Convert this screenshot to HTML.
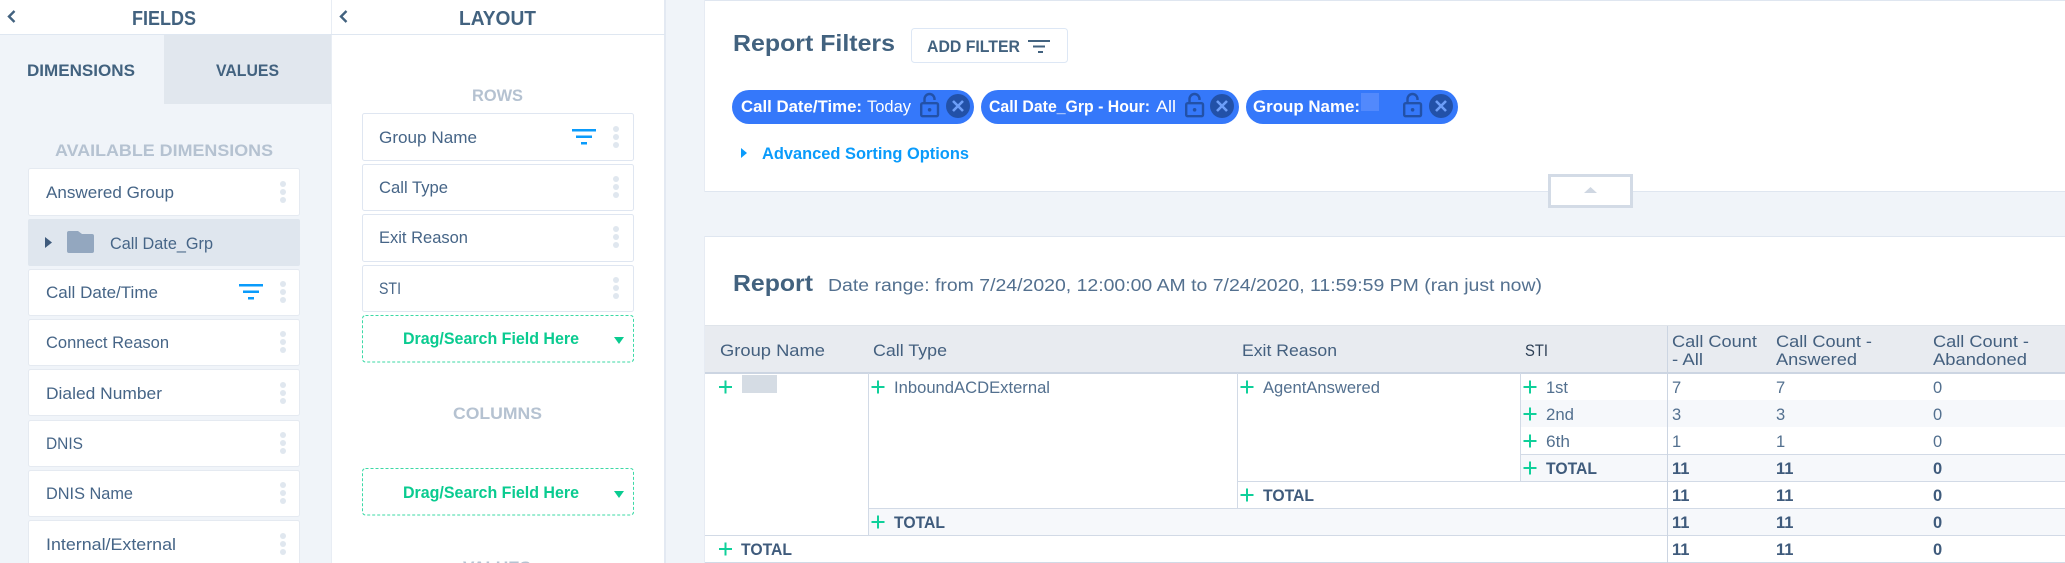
<!DOCTYPE html>
<html lang="en">
<head>
<meta charset="utf-8">
<title>Report</title>
<style>
html,body{margin:0;padding:0;width:2065px;height:563px;overflow:hidden;background:#f0f4f9}
svg{display:block}
text{font-family:"Liberation Sans",Arial,sans-serif;white-space:pre}
.c{font-size:17px;fill:#466587}
.h{font-size:20px;font-weight:700;fill:#42627f}
.t{font-size:17px;font-weight:700;fill:#42627f}
.l{font-size:17px;font-weight:700;fill:#b5c2d1}
.g{font-size:16.5px;font-weight:700;fill:#0acb90}
.w{font-size:16.5px;fill:#fff}
.wb{font-size:16.5px;font-weight:700;fill:#fff}
.th{font-size:16.5px;fill:#44607f}
.td{font-size:16.5px;fill:#53708f}
.b{font-size:16.5px;font-weight:700;fill:#3f5b7c}
.d{fill:#e0e7ef}
.f{fill:#0a9bfb}
.p{stroke:#0fd09a;stroke-width:2;fill:none}
</style>
</head>
<body>
<svg width="2065" height="563" viewBox="0 0 2065 563" xmlns="http://www.w3.org/2000/svg">
<defs>
<g id="dots"><circle cx="0" cy="0" r="3" class="d"/><circle cx="0" cy="8" r="3" class="d"/><circle cx="0" cy="16" r="3" class="d"/></g>
<g id="fil"><rect x="0" y="0" width="24" height="2.500" class="f"/><rect x="4" y="6.500" width="16" height="2.500" class="f"/><rect x="9" y="13" width="6" height="2.500" class="f"/></g>
<path id="plus" d="M-6.500 0H6.500M0 -6.500V6.500" class="p"/>
<g id="lock" fill="none" stroke="#2251a8" stroke-width="2.400"><rect x="1.200" y="10.200" width="16.800" height="13" rx="1.500"/><path d="M4.500 10V6a5 5 0 0 1 10 0v1"/><circle cx="9.600" cy="16.800" r="1.800" fill="#2251a8" stroke="none"/></g>
<g id="xb"><circle cx="0" cy="0" r="12" fill="#2251a8"/><path d="M-5 -5L5 5M5 -5L-5 5" stroke="#6d9ef8" stroke-width="2.600" fill="none"/></g>
</defs>

<rect x="0" y="0" width="2065" height="563" fill="#f0f4f9"/>

<!-- FIELDS panel -->
<rect x="0" y="0" width="331" height="34" fill="#fff"/>
<rect x="0" y="34" width="331" height="1" fill="#dfe7f1"/>
<path d="M14.500 11L9 16.500L14.500 22" fill="none" stroke="#42627f" stroke-width="2.400"/>
<text x="132" y="25" class="h" textLength="64" lengthAdjust="spacingAndGlyphs">FIELDS</text>
<rect x="164" y="35" width="167" height="69" fill="#e1e7ee"/>
<text x="27" y="76" class="t" textLength="108" lengthAdjust="spacingAndGlyphs">DIMENSIONS</text>
<text x="216" y="76" class="t" textLength="63" lengthAdjust="spacingAndGlyphs">VALUES</text>
<text x="55" y="156" class="l" textLength="218" lengthAdjust="spacingAndGlyphs">AVAILABLE DIMENSIONS</text>

<g fill="#fff" stroke="#e5eaf1" stroke-width="1">
<rect x="28.500" y="168.500" width="271" height="47" rx="2"/>
<rect x="28.500" y="269.500" width="271" height="46" rx="2"/>
<rect x="28.500" y="319.500" width="271" height="46" rx="2"/>
<rect x="28.500" y="369.500" width="271" height="46" rx="2"/>
<rect x="28.500" y="420.500" width="271" height="46" rx="2"/>
<rect x="28.500" y="470.500" width="271" height="46" rx="2"/>
<rect x="28.500" y="520.500" width="271" height="60" rx="2"/>
</g>
<rect x="28" y="219" width="272" height="47" rx="2" fill="#dfe6ee"/>
<path d="M45 237L52 242.500L45 248Z" fill="#3f5b7c"/>
<path d="M67 233a2 2 0 0 1 2-2h9l4 3h10a2 2 0 0 1 2 2v15a2 2 0 0 1-2 2H69a2 2 0 0 1-2-2Z" fill="#93a7bf"/>

<text x="46" y="198" class="c" textLength="128" lengthAdjust="spacingAndGlyphs">Answered Group</text>
<text x="110" y="249" class="c" textLength="103" lengthAdjust="spacingAndGlyphs">Call Date_Grp</text>
<text x="46" y="298" class="c" textLength="112" lengthAdjust="spacingAndGlyphs">Call Date/Time</text>
<text x="46" y="348" class="c" textLength="123" lengthAdjust="spacingAndGlyphs">Connect Reason</text>
<text x="46" y="399" class="c" textLength="116" lengthAdjust="spacingAndGlyphs">Dialed Number</text>
<text x="46" y="449" class="c" textLength="37" lengthAdjust="spacingAndGlyphs">DNIS</text>
<text x="46" y="499" class="c" textLength="87" lengthAdjust="spacingAndGlyphs">DNIS Name</text>
<text x="46" y="550" class="c" textLength="130" lengthAdjust="spacingAndGlyphs">Internal/External</text>

<use href="#dots" x="283" y="184"/>
<use href="#dots" x="283" y="284"/>
<use href="#dots" x="283" y="334"/>
<use href="#dots" x="283" y="385"/>
<use href="#dots" x="283" y="435"/>
<use href="#dots" x="283" y="485"/>
<use href="#dots" x="283" y="536"/>
<use href="#fil" x="239" y="284"/>

<!-- LAYOUT panel -->
<rect x="331" y="0" width="334" height="563" fill="#fff"/>
<rect x="331" y="0" width="1" height="563" fill="#e8edf4"/>
<rect x="664" y="0" width="2" height="563" fill="#e3e9f2"/>
<rect x="331" y="34" width="334" height="1" fill="#dfe7f1"/>
<path d="M346.500 11L341 16.500L346.500 22" fill="none" stroke="#42627f" stroke-width="2.400"/>
<text x="459" y="25" class="h" textLength="77" lengthAdjust="spacingAndGlyphs">LAYOUT</text>
<text x="472" y="101" class="l" textLength="51" lengthAdjust="spacingAndGlyphs">ROWS</text>

<g fill="#fff" stroke="#dfe6f1" stroke-width="1">
<rect x="362.500" y="113.500" width="271" height="47" rx="2"/>
<rect x="362.500" y="164.500" width="271" height="46" rx="2"/>
<rect x="362.500" y="214.500" width="271" height="47" rx="2"/>
<rect x="362.500" y="265.500" width="271" height="46" rx="2"/>
</g>
<text x="379" y="143" class="c" textLength="98" lengthAdjust="spacingAndGlyphs">Group Name</text>
<text x="379" y="193" class="c" textLength="69" lengthAdjust="spacingAndGlyphs">Call Type</text>
<text x="379" y="243" class="c" textLength="89" lengthAdjust="spacingAndGlyphs">Exit Reason</text>
<text x="379" y="294" class="c" textLength="22" lengthAdjust="spacingAndGlyphs">STI</text>
<use href="#dots" x="616" y="129"/>
<use href="#dots" x="616" y="179"/>
<use href="#dots" x="616" y="229"/>
<use href="#dots" x="616" y="280"/>
<use href="#fil" x="572" y="129"/>

<g fill="#fff" stroke="#3dd9a6" stroke-width="1" stroke-dasharray="3 2">
<rect x="362.500" y="315.500" width="271" height="46.500" rx="3"/>
<rect x="362.500" y="468.500" width="271" height="46.500" rx="3"/>
</g>
<text x="403" y="344" class="g" textLength="176" lengthAdjust="spacingAndGlyphs">Drag/Search Field Here</text>
<text x="403" y="498" class="g" textLength="176" lengthAdjust="spacingAndGlyphs">Drag/Search Field Here</text>
<path d="M614 337H624L619 344Z" fill="#0acb90"/>
<path d="M614 491H624L619 498Z" fill="#0acb90"/>
<text x="453" y="419" class="l" textLength="89" lengthAdjust="spacingAndGlyphs">COLUMNS</text>
<text x="463" y="573" class="l" textLength="68" lengthAdjust="spacingAndGlyphs">VALUES</text>

<!-- Report Filters card -->
<rect x="705" y="0" width="1360" height="192" fill="#fff"/>
<rect x="705" y="0" width="1360" height="1" fill="#dfe6f0"/>
<rect x="704" y="0" width="1" height="192" fill="#e6ebf3"/>
<rect x="705" y="191" width="1360" height="1" fill="#dfe6f0"/>
<text x="733" y="51" font-size="23" font-weight="700" fill="#42627f" textLength="162" lengthAdjust="spacingAndGlyphs">Report Filters</text>
<rect x="911.500" y="28.500" width="156" height="34" rx="3" fill="#fff" stroke="#dde7f5"/>
<text x="927" y="52" font-size="16.500" font-weight="700" fill="#42627f" textLength="93" lengthAdjust="spacingAndGlyphs">ADD FILTER</text>
<rect x="1028" y="40" width="22" height="2" fill="#42627f"/>
<rect x="1033" y="45.500" width="12" height="2" fill="#42627f"/>
<rect x="1038" y="51" width="5" height="2" fill="#42627f"/>

<rect x="732" y="90" width="242" height="34" rx="17" fill="#3578fa"/>
<text x="741" y="112" class="wb" textLength="121" lengthAdjust="spacingAndGlyphs">Call Date/Time:</text>
<text x="867" y="112" class="w" textLength="44" lengthAdjust="spacingAndGlyphs">Today</text>
<use href="#lock" x="920" y="93"/>
<use href="#xb" x="958" y="106"/>

<rect x="981" y="90" width="258" height="34" rx="17" fill="#3578fa"/>
<text x="989" y="112" class="wb" textLength="161" lengthAdjust="spacingAndGlyphs">Call Date_Grp - Hour:</text>
<text x="1156" y="112" class="w" textLength="20" lengthAdjust="spacingAndGlyphs">All</text>
<use href="#lock" x="1185" y="93"/>
<use href="#xb" x="1222" y="106"/>

<rect x="1246" y="90" width="212" height="34" rx="17" fill="#3578fa"/>
<text x="1253" y="112" class="wb" textLength="107" lengthAdjust="spacingAndGlyphs">Group Name:</text>
<rect x="1361" y="93" width="18" height="18" fill="#5289fc"/>
<use href="#lock" x="1403" y="93"/>
<use href="#xb" x="1441" y="106"/>

<path d="M741 148L747 153L741 158Z" class="f"/>
<text x="762" y="159" font-size="16.500" font-weight="700" fill="#0a9bfb" textLength="207" lengthAdjust="spacingAndGlyphs">Advanced Sorting Options</text>

<!-- collapse tab -->
<rect x="1549.500" y="175.500" width="82" height="31" fill="#fff" stroke="#d3dbe6" stroke-width="3"/>
<path d="M1584 193L1590.500 187L1597 193Z" fill="#cfd7e2"/>

<!-- Report card -->
<rect x="705" y="236" width="1360" height="327" fill="#fff"/>
<rect x="705" y="236" width="1360" height="1" fill="#dfe6f0"/>
<rect x="704" y="236" width="1" height="327" fill="#e6ebf3"/>
<text x="733" y="291" font-size="23" font-weight="700" fill="#42627f" textLength="80" lengthAdjust="spacingAndGlyphs">Report</text>
<text x="828" y="291" font-size="17.500" fill="#53708f" textLength="714" lengthAdjust="spacingAndGlyphs">Date range: from 7/24/2020, 12:00:00 AM to 7/24/2020, 11:59:59 PM (ran just now)</text>

<!-- table backgrounds -->
<rect x="705" y="326" width="1360" height="47" fill="#e8ebf0"/>
<rect x="1521" y="400" width="544" height="27" fill="#f6f8fb"/>
<rect x="1521" y="454" width="544" height="27" fill="#f6f8fb"/>
<rect x="869" y="508" width="1196" height="27" fill="#f6f8fb"/>

<!-- table lines -->
<rect x="705" y="325" width="1360" height="1" fill="#dfe4ea"/>
<rect x="705" y="372" width="1360" height="2" fill="#ccd5e2"/>
<rect x="1521" y="454" width="544" height="1" fill="#d2dae6"/>
<rect x="1238" y="481" width="827" height="1" fill="#d2dae6"/>
<rect x="869" y="508" width="1196" height="1" fill="#d2dae6"/>
<rect x="705" y="535" width="1360" height="1" fill="#d2dae6"/>
<rect x="705" y="562" width="1360" height="1" fill="#d2dae6"/>
<rect x="868" y="373" width="1" height="163" fill="#d2dae6"/>
<rect x="1237" y="373" width="1" height="136" fill="#d2dae6"/>
<rect x="1520" y="373" width="1" height="109" fill="#d2dae6"/>
<rect x="1667" y="326" width="1" height="237" fill="#ccd5e2"/>

<!-- header text -->
<text x="720" y="356" class="th" textLength="105" lengthAdjust="spacingAndGlyphs">Group Name</text>
<text x="873" y="356" class="th" textLength="74" lengthAdjust="spacingAndGlyphs">Call Type</text>
<text x="1242" y="356" class="th" textLength="95" lengthAdjust="spacingAndGlyphs">Exit Reason</text>
<text x="1525" y="356" class="th" style="fill:#2d3f55" textLength="23" lengthAdjust="spacingAndGlyphs">STI</text>
<text x="1672" y="347" class="th" textLength="85" lengthAdjust="spacingAndGlyphs">Call Count</text>
<text x="1672" y="365" class="th" textLength="31" lengthAdjust="spacingAndGlyphs">- All</text>
<text x="1776" y="347" class="th" textLength="96" lengthAdjust="spacingAndGlyphs">Call Count -</text>
<text x="1776" y="365" class="th" textLength="81" lengthAdjust="spacingAndGlyphs">Answered</text>
<text x="1933" y="347" class="th" textLength="96" lengthAdjust="spacingAndGlyphs">Call Count -</text>
<text x="1933" y="365" class="th" textLength="94" lengthAdjust="spacingAndGlyphs">Abandoned</text>

<!-- body -->
<use href="#plus" x="725.500" y="387"/>
<rect x="742" y="375" width="35" height="18" fill="#d5dce4"/>
<use href="#plus" x="878" y="387"/>
<text x="894" y="393" class="td" textLength="156" lengthAdjust="spacingAndGlyphs">InboundACDExternal</text>
<use href="#plus" x="1247" y="387"/>
<text x="1263" y="393" class="td" textLength="117" lengthAdjust="spacingAndGlyphs">AgentAnswered</text>

<use href="#plus" x="1530" y="387"/>
<text x="1546" y="393" class="td" textLength="22" lengthAdjust="spacingAndGlyphs">1st</text>
<use href="#plus" x="1530" y="414"/>
<text x="1546" y="420" class="td" textLength="28" lengthAdjust="spacingAndGlyphs">2nd</text>
<use href="#plus" x="1530" y="441"/>
<text x="1546" y="447" class="td" textLength="24" lengthAdjust="spacingAndGlyphs">6th</text>
<use href="#plus" x="1530" y="468"/>
<text x="1546" y="474" class="b" textLength="51" lengthAdjust="spacingAndGlyphs">TOTAL</text>
<use href="#plus" x="1247" y="495"/>
<text x="1263" y="501" class="b" textLength="51" lengthAdjust="spacingAndGlyphs">TOTAL</text>
<use href="#plus" x="878" y="522"/>
<text x="894" y="528" class="b" textLength="51" lengthAdjust="spacingAndGlyphs">TOTAL</text>
<use href="#plus" x="725.500" y="549"/>
<text x="741" y="555" class="b" textLength="51" lengthAdjust="spacingAndGlyphs">TOTAL</text>

<text x="1672" y="393" class="td">7</text><text x="1776" y="393" class="td">7</text><text x="1933" y="393" class="td">0</text>
<text x="1672" y="420" class="td">3</text><text x="1776" y="420" class="td">3</text><text x="1933" y="420" class="td">0</text>
<text x="1672" y="447" class="td">1</text><text x="1776" y="447" class="td">1</text><text x="1933" y="447" class="td">0</text>
<text x="1672" y="474" class="b">11</text><text x="1776" y="474" class="b">11</text><text x="1933" y="474" class="b">0</text>
<text x="1672" y="501" class="b">11</text><text x="1776" y="501" class="b">11</text><text x="1933" y="501" class="b">0</text>
<text x="1672" y="528" class="b">11</text><text x="1776" y="528" class="b">11</text><text x="1933" y="528" class="b">0</text>
<text x="1672" y="555" class="b">11</text><text x="1776" y="555" class="b">11</text><text x="1933" y="555" class="b">0</text>
</svg>
</body>
</html>
